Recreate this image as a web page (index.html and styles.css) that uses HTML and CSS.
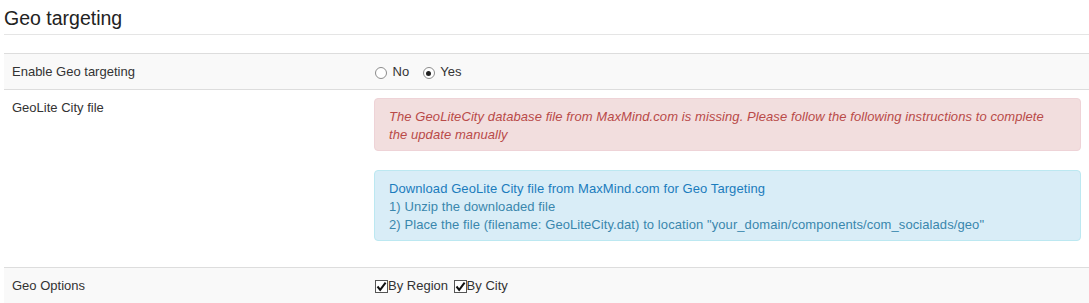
FILE: index.html
```html
<!DOCTYPE html>
<html lang="en">
<head>
  <meta charset="UTF-8" />
  <title>Geo targeting</title>
  <link rel="stylesheet" href="styles.css">
</head>
<body>
  <div class="page">
    <h2 class="page-header">Geo targeting</h2>

    <table class="settings">
      <tr class="stripe">
        <td class="key">Enable Geo targeting</td>
        <td>
          <label class="opt"><span class="radio"></span> No</label>
          <label class="opt"><span class="radio checked"></span> Yes</label>
        </td>
      </tr>
      <tr>
        <td class="key">GeoLite City file</td>
        <td>
          <div class="alert alert-error">
            The GeoLiteCity database file from MaxMind.com is missing. Please follow the following instructions to complete the update manually
          </div>
          <div class="alert alert-info">
            <a href="#">Download GeoLite City file from MaxMind.com for Geo Targeting</a><br>
            1) Unzip the downloaded file<br>
            2) Place the file (filename: GeoLiteCity.dat) to location "your_domain/components/com_socialads/geo"
          </div>
        </td>
      </tr>
      <tr class="stripe">
        <td class="key">Geo Options</td>
        <td>
          <label class="chk"><span class="check"><svg width="11" height="11" viewBox="0 0 11 11"><path d="M1.5 5.5 L4.2 8.8 L9.6 1.6" fill="none" stroke="#111" stroke-width="2"/></svg></span>By Region</label>
          <label class="chk"><span class="check"><svg width="11" height="11" viewBox="0 0 11 11"><path d="M1.5 5.5 L4.2 8.8 L9.6 1.6" fill="none" stroke="#111" stroke-width="2"/></svg></span>By City</label>
        </td>
      </tr>
    </table>
  </div>
</body>
</html>
```

FILE: styles.css
```css
body {
  margin: 0;
  padding: 0;
  font-family: 'Liberation Sans', Arial, sans-serif;
  font-size: 13px;
  color: #333;
  background: #fff;
}
.page {
  padding-left: 4px;
}
.page-header {
  margin: 0 0 18px;
  padding: 8px 0 6px;
  font-size: 19.5px;
  font-weight: normal;
  line-height: 20px;
  color: #222;
  border-bottom: 1px solid #e5e5e5;
}
.settings {
  width: 100%;
  border-collapse: collapse;
  border-spacing: 0;
}
.settings td {
  border-top: 1px solid #ddd;
  padding: 8px;
  line-height: 19px;
  vertical-align: top;
  text-align: left;
}
.settings td.key {
  width: 346px;
}
.stripe td {
  background: #f9f9f9;
}
.opt {
  margin-right: 9px;
}
.radio {
  display: inline-block;
  width: 10px;
  height: 10px;
  margin: 0 2px 0 1px;
  border: 1px solid #8c8c8c;
  border-radius: 50%;
  background: #fff;
  vertical-align: -3px;
  position: relative;
}
.radio.checked::after {
  content: "";
  position: absolute;
  left: 2.5px;
  top: 2.5px;
  width: 5px;
  height: 5px;
  border-radius: 50%;
  background: #222;
}
.chk {
  margin-right: 1px;
}
.check {
  display: inline-block;
  width: 11px;
  height: 11px;
  margin-left: 1px;
  border: 1px solid #555;
  background: #fff;
  vertical-align: -3px;
}
.check svg {
  display: block;
}
.alert {
  padding: 9px 35px 6px 14px;
  line-height: 18px;
  letter-spacing: 0.08px;
  border: 1px solid;
  border-radius: 4px;
}
.alert-error {
  margin-bottom: 19px;
  color: #b94a48;
  background: #f2dede;
  border-color: #eed3d7;
  font-style: italic;
}
.alert-info {
  margin-bottom: 18px;
  color: #3a87ad;
  background: #d9edf7;
  border-color: #bce8f1;
}
.alert-info a {
  color: #1b7cbd;
  text-decoration: none;
}
```
